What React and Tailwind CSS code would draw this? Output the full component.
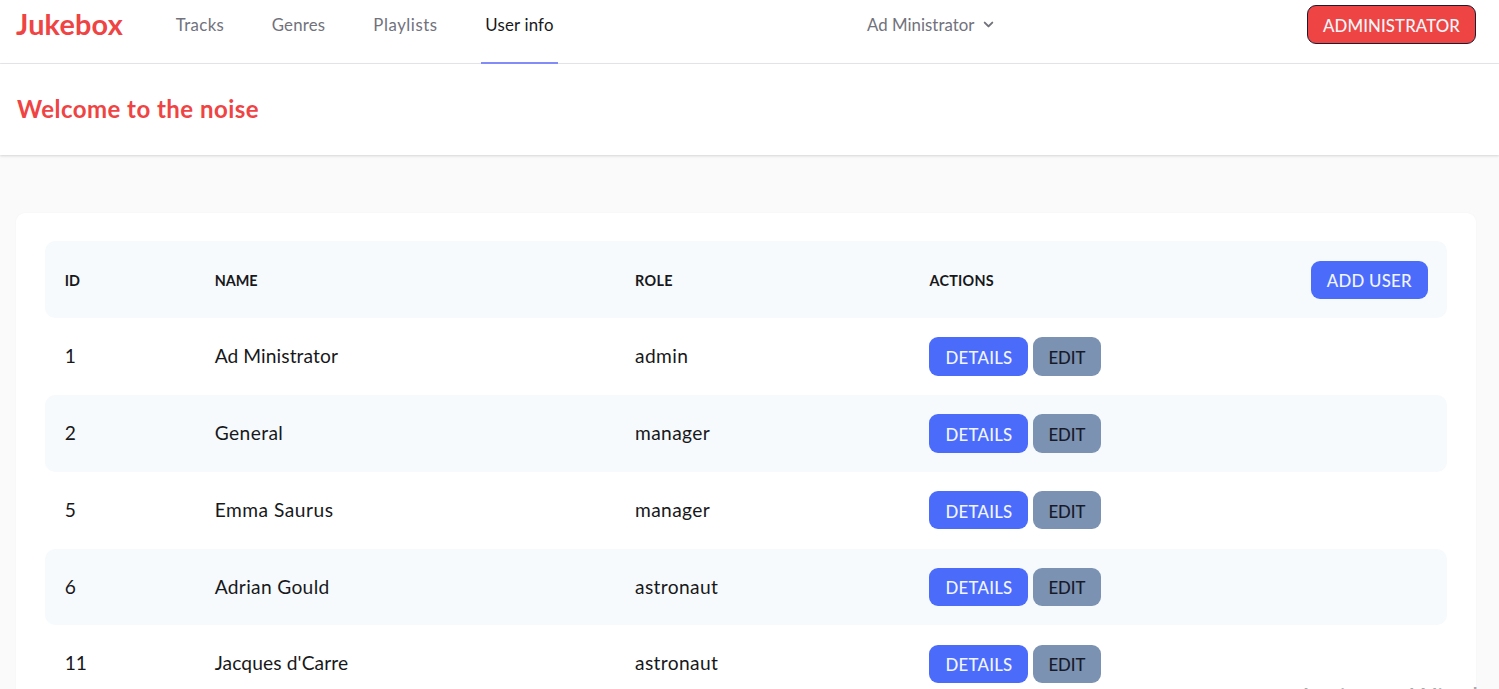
const users = [
  { id: 1, name: "Ad Ministrator", role: "admin", nameClass: "tracking-[0.08px]" },
  { id: 2, name: "General", role: "manager", nameClass: "tracking-[0.4px]" },
  { id: 5, name: "Emma Saurus", role: "manager", nameClass: "tracking-[0.5px]" },
  { id: 6, name: "Adrian Gould", role: "astronaut", nameClass: "tracking-[0.32px]" },
  { id: 11, name: "Jacques d'Carre", role: "astronaut", nameClass: "tracking-[0.12px]" },
];

const row =
  "grid h-[76.8px] grid-cols-[150px_420.4px_294.4px_1fr] items-center rounded-[10px] pl-[19.7px] pr-[19.2px]";
const button =
  "flex h-[38.4px] items-center justify-center rounded-[9px] text-[16.8px]";

function NavLink({ children, className }) {
  return (
    <a className={`flex h-[64px] justify-center text-[16.8px] leading-[50px] ${className}`}>
      {children}
    </a>
  );
}

function Nav() {
  return (
    <nav className="flex h-[64px] border-b border-[#e8e8ea] bg-white text-[#71727c]">
      <div className="w-[172px] pl-[16px] text-[28.8px] font-bold leading-[49px] text-[#ef4444]">
        <span className="tracking-[0.2px]">Jukebox</span>
      </div>
      <NavLink className="w-[56px] tracking-[0.35px]">Tracks</NavLink>
      <NavLink className="ml-[39px] w-[63px] tracking-[0.2px]">Genres</NavLink>
      <NavLink className="ml-[39px] w-[73px] tracking-[0.55px]">Playlists</NavLink>
      <NavLink className="ml-[39px] w-[77px] border-b-2 border-[#818cf8] tracking-[0.2px] text-[#18181b]">
        User info
      </NavLink>
      <div className="ml-[309px] flex h-[49px] items-center text-[16.8px]">
        <span className="w-[109px] whitespace-nowrap tracking-[0.04px]">Ad Ministrator</span>
        <svg className="ml-[3px] size-[19px]" viewBox="0 0 20 20" fill="currentColor">
          <path
            fillRule="evenodd"
            clipRule="evenodd"
            d="M5.293 7.293a1 1 0 011.414 0L10 10.586l3.293-3.293a1 1 0 111.414 1.414l-4 4a1 1 0 01-1.414 0l-4-4a1 1 0 010-1.414z"
          />
        </svg>
      </div>
      <button
        className={`${button} ml-auto mr-[23px] mt-[5px] h-[39px] w-[169px] border border-[#1c1c30] bg-[#ef4444] pt-[2px] font-medium tracking-[0.1px] text-[#f1f5f9]`}
      >
        ADMINISTRATOR
      </button>
    </nav>
  );
}

export default function App() {
  return (
    <div className="relative h-[689px] overflow-hidden bg-[#fafafa] font-['Lato',sans-serif] text-[#18181b]">
      <Nav />
      <header className="flex h-[91px] items-center bg-white pb-[2px] pl-[17px] shadow-[0_1px_3px_rgba(0,0,0,0.1),0_1px_2px_rgba(0,0,0,0.06)]">
        <h1 className="text-[24px] font-bold tracking-[0.46px] text-[#ef4444]">
          Welcome to the noise
        </h1>
      </header>
      <main className="ml-4 mr-[23px] mt-[58px] rounded-[9px] bg-white px-[29px] pt-[28.4px] shadow-[0_0_2px_rgba(0,0,0,0.04)]">
        <div className={`${row} bg-[#f6fafd] text-[14.4px] font-bold`}>
          <span className="pt-[2px]">ID</span>
          <span className="pt-[2px]">NAME</span>
          <span className="pt-[2px] tracking-[0.3px]">ROLE</span>
          <div className="flex items-center justify-between">
            <span className="pt-[2px] tracking-[0.25px]">ACTIONS</span>
            <button
              className={`${button} w-[117px] bg-[#4b6bfb] pt-[1.5px] font-medium tracking-[0.25px] text-[#f1f5ff]`}
            >
              ADD USER
            </button>
          </div>
        </div>
        {users.map((user) => (
          <div key={user.id} className={`${row} text-[19.2px] even:bg-white odd:bg-[#f6fafd]`}>
            <span>{user.id}</span>
            <span className={user.nameClass}>{user.name}</span>
            <span className="tracking-[0.35px]">{user.role}</span>
            <div className="flex gap-[5px]">
              <button
                className={`${button} w-[99px] bg-[#4b6bfb] pt-[2px] font-medium tracking-[0.25px] text-[#f1f5ff]`}
              >
                DETAILS
              </button>
              <button
                className={`${button} w-[68px] bg-[#7b92b2] pr-px pt-[2px] font-medium text-[#181a2a]`}
              >
                EDIT
              </button>
            </div>
          </div>
        ))}
      </main>
      <div className="absolute left-[1297px] top-[678px] whitespace-nowrap font-['Open_Sans',sans-serif] text-[28.6px] leading-[39px] text-[#a9a9a9]">
        Activate Windows
      </div>
    </div>
  );
}
